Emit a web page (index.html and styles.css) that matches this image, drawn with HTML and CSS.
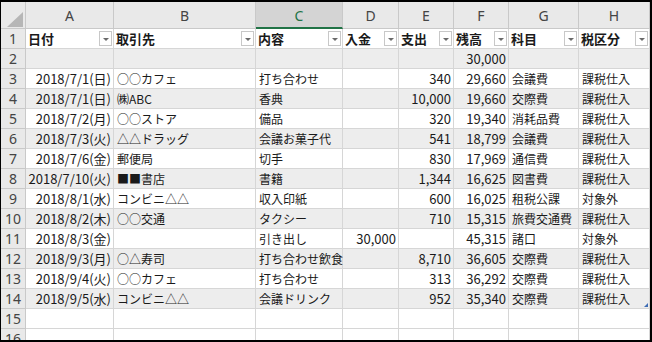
FILE: index.html
```html
<!DOCTYPE html>
<html lang="ja">
<head>
<meta charset="utf-8">
<title>出納帳</title>
<link rel="stylesheet" href="styles.css">
</head>
<body>
<div class="frame">
  <div class="sheet">
    <div class="row heads">
      <div class="corner"><svg width="16" height="15" viewBox="0 0 16 15"><polygon points="16,0 16,15 0,15" fill="#b6b6b6"/></svg></div>
      <div class="ch">A</div><div class="ch">B</div><div class="ch sel">C</div><div class="ch">D</div><div class="ch">E</div><div class="ch">F</div><div class="ch">G</div><div class="ch">H</div>
    </div>
    <div class="row">
      <div class="rh">1</div>
      <div class="c hd"><span>日付</span><i class="fb"></i></div>
      <div class="c hd"><span>取引先</span><i class="fb"></i></div>
      <div class="c hd"><span>内容</span><i class="fb"></i></div>
      <div class="c hd"><span>入金</span><i class="fb"></i></div>
      <div class="c hd"><span>支出</span><i class="fb"></i></div>
      <div class="c hd"><span>残高</span><i class="fb"></i></div>
      <div class="c hd"><span>科目</span><i class="fb"></i></div>
      <div class="c hd"><span>税区分</span><i class="fb"></i></div>
    </div>
    <div class="row alt">
      <div class="rh">2</div>
      <div class="c"></div><div class="c"></div><div class="c"></div><div class="c"></div><div class="c"></div>
      <div class="c n">30,000</div><div class="c"></div><div class="c"></div>
    </div>
    <div class="row">
      <div class="rh">3</div>
      <div class="c n">2018/7/1(日)</div><div class="c">○○カフェ</div><div class="c">打ち合わせ</div><div class="c"></div>
      <div class="c n">340</div><div class="c n">29,660</div><div class="c">会議費</div><div class="c">課税仕入</div>
    </div>
    <div class="row alt">
      <div class="rh">4</div>
      <div class="c n">2018/7/1(日)</div><div class="c">㈱ABC</div><div class="c">香典</div><div class="c"></div>
      <div class="c n">10,000</div><div class="c n">19,660</div><div class="c">交際費</div><div class="c">課税仕入</div>
    </div>
    <div class="row">
      <div class="rh">5</div>
      <div class="c n">2018/7/2(月)</div><div class="c">○○ストア</div><div class="c">備品</div><div class="c"></div>
      <div class="c n">320</div><div class="c n">19,340</div><div class="c">消耗品費</div><div class="c">課税仕入</div>
    </div>
    <div class="row alt">
      <div class="rh">6</div>
      <div class="c n">2018/7/3(火)</div><div class="c">△△ドラッグ</div><div class="c">会議お菓子代</div><div class="c"></div>
      <div class="c n">541</div><div class="c n">18,799</div><div class="c">会議費</div><div class="c">課税仕入</div>
    </div>
    <div class="row">
      <div class="rh">7</div>
      <div class="c n">2018/7/6(金)</div><div class="c">郵便局</div><div class="c">切手</div><div class="c"></div>
      <div class="c n">830</div><div class="c n">17,969</div><div class="c">通信費</div><div class="c">課税仕入</div>
    </div>
    <div class="row alt">
      <div class="rh">8</div>
      <div class="c n">2018/7/10(火)</div><div class="c">■■書店</div><div class="c">書籍</div><div class="c"></div>
      <div class="c n">1,344</div><div class="c n">16,625</div><div class="c">図書費</div><div class="c">課税仕入</div>
    </div>
    <div class="row">
      <div class="rh">9</div>
      <div class="c n">2018/8/1(水)</div><div class="c">コンビニ△△</div><div class="c">収入印紙</div><div class="c"></div>
      <div class="c n">600</div><div class="c n">16,025</div><div class="c">租税公課</div><div class="c">対象外</div>
    </div>
    <div class="row alt">
      <div class="rh">10</div>
      <div class="c n">2018/8/2(木)</div><div class="c">○○交通</div><div class="c">タクシー</div><div class="c"></div>
      <div class="c n">710</div><div class="c n">15,315</div><div class="c">旅費交通費</div><div class="c">課税仕入</div>
    </div>
    <div class="row">
      <div class="rh">11</div>
      <div class="c n">2018/8/3(金)</div><div class="c"></div><div class="c">引き出し</div><div class="c n">30,000</div>
      <div class="c"></div><div class="c n">45,315</div><div class="c">諸口</div><div class="c">対象外</div>
    </div>
    <div class="row alt">
      <div class="rh">12</div>
      <div class="c n">2018/9/3(月)</div><div class="c">○△寿司</div><div class="c">打ち合わせ飲食</div><div class="c"></div>
      <div class="c n">8,710</div><div class="c n">36,605</div><div class="c">交際費</div><div class="c">課税仕入</div>
    </div>
    <div class="row">
      <div class="rh">13</div>
      <div class="c n">2018/9/4(火)</div><div class="c">○○カフェ</div><div class="c">打ち合わせ</div><div class="c"></div>
      <div class="c n">313</div><div class="c n">36,292</div><div class="c">交際費</div><div class="c">課税仕入</div>
    </div>
    <div class="row alt">
      <div class="rh">14</div>
      <div class="c n">2018/9/5(水)</div><div class="c">コンビニ△△</div><div class="c">会議ドリンク</div><div class="c"></div>
      <div class="c n">952</div><div class="c n">35,340</div><div class="c">交際費</div><div class="c last">課税仕入<i class="handle"></i></div>
    </div>
    <div class="row">
      <div class="rh">15</div>
      <div class="c"></div><div class="c"></div><div class="c"></div><div class="c"></div><div class="c"></div><div class="c"></div><div class="c"></div><div class="c"></div>
    </div>
    <div class="row">
      <div class="rh">16</div>
      <div class="c"></div><div class="c"></div><div class="c"></div><div class="c"></div><div class="c"></div><div class="c"></div><div class="c"></div><div class="c"></div>
    </div>
  </div>
</div>
</body>
</html>
```

FILE: styles.css
```css
html, body {
  margin: 0;
  padding: 0;
  background: #000;
}
.frame {
  width: 652px;
  height: 342px;
  box-sizing: border-box;
  padding: 2px 2px 2px 1px;
  overflow: hidden;
}
.sheet {
  height: 100%;
  overflow: hidden;
  background: #fff;
  font-family: "Noto Sans CJK JP", sans-serif;
  font-size: 12px;
  color: #1a1a1a;
}
.row {
  display: grid;
  grid-template-columns: 25px 88px 142px 87px 56px 55px 55px 70px 1fr;
  height: 20px;
}
.row.heads {
  height: 27px;
}
.corner, .ch, .rh {
  background: #e9e9e9;
  box-sizing: border-box;
  border-right: 1px solid #c9c9c9;
  border-bottom: 1px solid #c9c9c9;
  font-family: "Noto Sans", "Liberation Sans", sans-serif;
  font-size: 14px;
  color: #444;
}
.corner {
  display: flex;
  align-items: flex-end;
  justify-content: flex-end;
  padding: 0 2px 1px 0;
}
.corner svg {
  display: block;
}
.ch {
  display: flex;
  align-items: center;
  justify-content: center;
  padding-top: 1px;
}
.ch.sel {
  background: #d4d4d4;
  color: #217346;
  border-bottom: 2px solid #217346;
}
.rh {
  display: flex;
  align-items: center;
  justify-content: center;
  line-height: 19px;
}
.c {
  box-sizing: border-box;
  border-right: 1px solid #d6d6d6;
  border-bottom: 1px solid #d6d6d6;
  line-height: 19px;
  padding: 0 2px 0 3px;
  white-space: nowrap;
}
.row.alt .c {
  background: #ededed;
}
.c.n {
  font-size: 13px;
  text-align: right;
  padding: 0 2px 0 0;
}
.c.hd {
  display: flex;
  align-items: center;
  justify-content: space-between;
  font-size: 13px;
  font-weight: bold;
  padding: 0 1px 0 2px;
  background: #fff;
}
.fb {
  display: flex;
  align-items: center;
  justify-content: center;
  width: 13px;
  height: 15px;
  box-sizing: border-box;
  border: 1px solid #c8c8c8;
  background: #fff;
  padding-top: 2px;
}
.fb::after {
  content: "";
  width: 0;
  height: 0;
  border-left: 3px solid transparent;
  border-right: 3px solid transparent;
  border-top: 3px solid #6a6a6a;
}
.c.last {
  position: relative;
}
.handle {
  position: absolute;
  right: 1px;
  bottom: 1px;
  width: 0;
  height: 0;
  border-left: 4px solid transparent;
  border-bottom: 4px solid #3e6db5;
}
```
